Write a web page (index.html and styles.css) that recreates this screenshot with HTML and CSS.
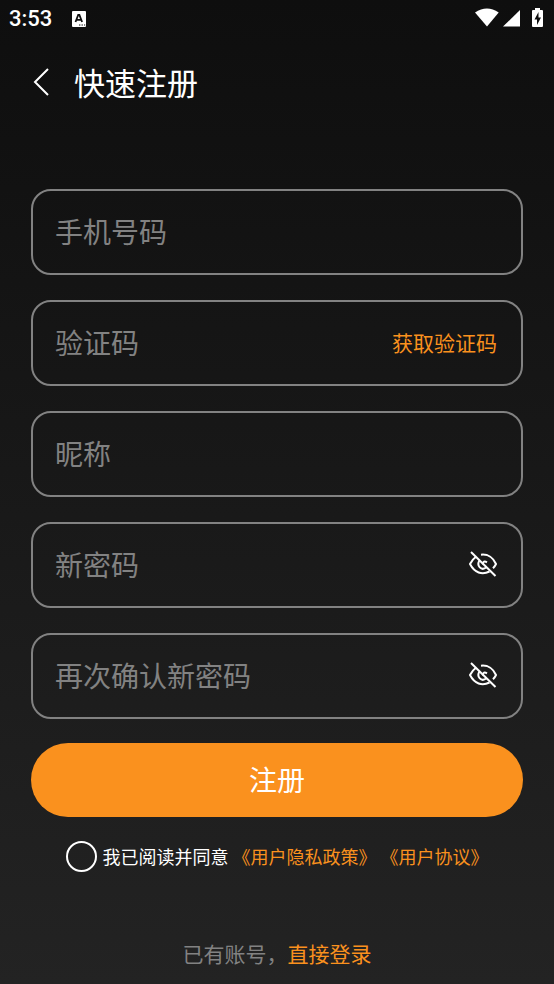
FILE: index.html
```html
<!DOCTYPE html>
<html lang="zh-CN">
<head>
<meta charset="utf-8">
<meta name="viewport" content="width=device-width, initial-scale=1">
<title>快速注册</title>
<link rel="stylesheet" href="styles.css">
</head>
<body>
<div class="screen">
  <div class="status">
    <span class="time">3:53</span>
    <svg class="app-mark" width="16" height="18" viewBox="0 0 16 18" aria-hidden="true"><rect x="1" y="1" width="14" height="16" rx="1" fill="#fff"/><path d="M4.500 12 7.200 5h1.200l2.700 7M5.600 9.800h4.400" fill="none" stroke="#111" stroke-width="1.800"/><path d="M8 15h1.400M10.500 15h1.400M13 15h1.200" stroke="#111" stroke-width="1.200"/></svg>
    <svg class="signals" width="70" height="22" viewBox="0 0 70 22" aria-hidden="true"><path d="M0 4.600Q12-3.800 23.700 4.600L12 18.500Z" fill="#fff"/><path d="M45 2v16.500H28Z" fill="#fff"/><path fill-rule="evenodd" d="M60 0h5v2h2q1 0 1 1v15q0 1-1 1h-9q-1 0-1-1V3q0-1 1-1h2ZM63.500 4 59.500 11.500h2.500V17l4-7.500h-2.500Z" fill="#fff"/></svg>
  </div>
  <header class="header">
    <button class="back" type="button" aria-label="返回"><svg width="18" height="30" viewBox="0 0 18 30"><path d="M16 2 3 15l13 13" fill="none" stroke="#fff" stroke-width="2"/></svg></button>
    <h1>快速注册</h1>
  </header>
  <form class="form">
    <div class="fields">
      <div class="field"><input type="tel" placeholder="手机号码" aria-label="手机号码"></div>
      <div class="field"><input type="text" placeholder="验证码" aria-label="验证码"><button class="code" type="button">获取验证码</button></div>
      <div class="field"><input type="text" placeholder="昵称" aria-label="昵称"></div>
      <div class="field"><input type="password" placeholder="新密码" aria-label="新密码"><button class="eye" type="button" aria-label="显示密码"><svg width="28" height="28" viewBox="0 0 28 28"><g fill="none" stroke="#fff" stroke-width="2"><path d="M2 2 26.500 26"/><path d="M12 4.700C19 3.800 24.500 8 27 14q-1 2.200-3 4.200M7 6.800Q3.200 9.500 1 14C5.500 22.800 13 25.200 20.500 21.500M10.300 10.800C7.500 15.500 12 21.500 17.500 17.300M14 14.500q0-4.500 4-2.200"/></g></svg></button></div>
      <div class="field"><input type="password" placeholder="再次确认新密码" aria-label="再次确认新密码"><button class="eye" type="button" aria-label="显示密码"><svg width="28" height="28" viewBox="0 0 28 28"><g fill="none" stroke="#fff" stroke-width="2"><path d="M2 2 26.500 26"/><path d="M12 4.700C19 3.800 24.500 8 27 14q-1 2.200-3 4.200M7 6.800Q3.200 9.500 1 14C5.500 22.800 13 25.200 20.500 21.500M10.300 10.800C7.500 15.500 12 21.500 17.500 17.300M14 14.500q0-4.500 4-2.200"/></g></svg></button></div>
    </div>
    <button class="submit" type="submit">注册</button>
    <div class="agree">
      <input type="checkbox" id="agree"><label for="agree">我已阅读并同意</label>
      <a href="#privacy">《用户隐私政策》</a>
      <a href="#terms">《用户协议》</a>
    </div>
  </form>
  <p class="login">已有账号，<a href="#login">直接登录</a></p>
</div>
</body>
</html>
```
FILE: styles.css
```css
* {
  box-sizing: border-box;
}

body {
  margin: 0;
  background: #222;
  color: #fff;
  font-family: "Noto Sans CJK SC", sans-serif;
}

.screen {
  min-height: 100vh;
  display: flex;
  flex-direction: column;
  background: linear-gradient(#0e0e0e, #232323);
}

button {
  margin: 0;
  padding: 0;
  border: 0;
  background: none;
  color: inherit;
  font: inherit;
  cursor: pointer;
}

svg {
  display: block;
}

a {
  color: #fa911e;
  text-decoration: none;
}

.status {
  display: flex;
  align-items: center;
  height: 38px;
  padding: 0 9px;
}

.time {
  font: 500 22px/38px Roboto, sans-serif;
}

.app-mark {
  margin-left: 19px;
}

.signals {
  margin-left: auto;
}

.header {
  display: flex;
  align-items: center;
  gap: 24px;
  height: 87px;
  padding: 0 32px;
}

h1 {
  margin: 0;
  font-size: 31px;
  font-weight: 400;
  line-height: 44px;
}

.form {
  display: flex;
  flex-direction: column;
  gap: 24px;
  padding: 64px 31px 0;
}

.fields {
  display: grid;
  gap: 25px;
}

.field {
  display: flex;
  align-items: center;
  height: 86px;
  padding: 0 24px 2px 22px;
  border: 2px solid #828282;
  border-radius: 20px;
}

.field input {
  flex: 1;
  min-width: 0;
  height: 100%;
  padding: 0;
  border: 0;
  outline: 0;
  background: none;
  color: #fff;
  font: 28px "Noto Sans CJK SC", sans-serif;
}

.field input::placeholder {
  color: #828282;
  opacity: 1;
}

.code {
  color: #fa911e;
  font-size: 21px;
}

.submit {
  height: 74px;
  padding-bottom: 2px;
  border-radius: 37px;
  background: #fa911e;
  font-size: 28px;
}

.agree {
  display: flex;
  align-items: center;
  justify-content: center;
  gap: 4px;
  font-size: 18px;
  line-height: 26px;
}

.agree label,
.agree a {
  padding-bottom: 2px;
}

.agree input {
  appearance: none;
  width: 31px;
  height: 31px;
  margin: 0 2px 0 0;
  border: 2px solid #fff;
  border-radius: 50%;
}

.agree input:checked {
  background: #fa911e;
}

.login {
  margin: auto 0 0;
  padding: 24px 0 15px;
  color: #828282;
  font-size: 21px;
  line-height: 32px;
  text-align: center;
}
```
